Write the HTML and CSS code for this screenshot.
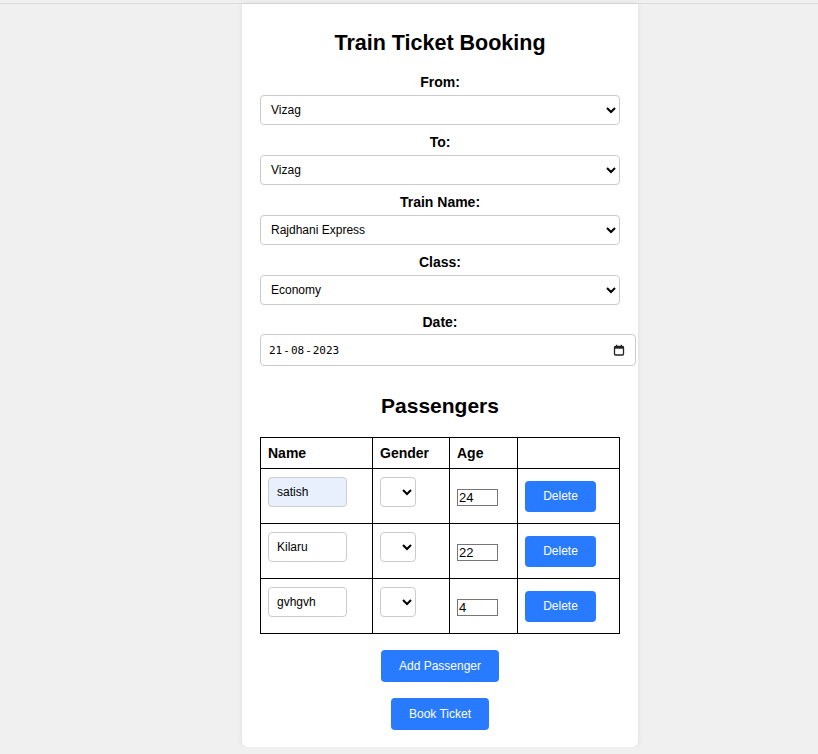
FILE: index.html
```html
<!DOCTYPE html>
<html>
<head>
<meta charset="utf-8">
<link rel="stylesheet" href="styles.css">
</head>
<body>
<div class="topline"></div>
<div class="container">
  <h1 class="title">Train Ticket Booking</h1>
  <div class="field">
    <label class="label">From:</label>
    <select class="select"><option>Vizag</option></select>
  </div>
  <div class="field">
    <label class="label">To:</label>
    <select class="select"><option>Vizag</option></select>
  </div>
  <div class="field">
    <label class="label">Train Name:</label>
    <select class="select"><option>Rajdhani Express</option></select>
  </div>
  <div class="field">
    <label class="label">Class:</label>
    <select class="select"><option>Economy</option></select>
  </div>
  <div class="field">
    <label class="label date-label">Date:</label>
    <div class="date">
      <span class="date-text"><span>21</span><span class="sep">-</span><span>08</span><span class="sep">-</span><span>2023</span></span>
      <svg class="cal" width="12" height="12" viewBox="0 0 12 12"><rect x="1.5" y="2.5" width="9" height="8.5" rx="1" fill="none" stroke="#222" stroke-width="1.3"/><rect x="1.5" y="2.5" width="9" height="2.2" fill="#222"/><rect x="3" y="0.8" width="1.3" height="2.2" fill="#222"/><rect x="7.7" y="0.8" width="1.3" height="2.2" fill="#222"/></svg>
    </div>
  </div>
  <h2 class="subtitle">Passengers</h2>
  <table class="ptable">
    <thead>
      <tr><th class="c1">Name</th><th class="c2">Gender</th><th class="c3">Age</th><th class="c4"></th></tr>
    </thead>
    <tbody>
      <tr>
        <td><input class="name autofill" type="text" value="satish"></td>
        <td><select class="gender"><option></option></select></td>
        <td><input class="age" type="text" value="24"></td>
        <td><button class="btn del">Delete</button></td>
      </tr>
      <tr>
        <td><input class="name" type="text" value="Kilaru"></td>
        <td><select class="gender"><option></option></select></td>
        <td><input class="age" type="text" value="22"></td>
        <td><button class="btn del">Delete</button></td>
      </tr>
      <tr>
        <td><input class="name" type="text" value="gvhgvh"></td>
        <td><select class="gender"><option></option></select></td>
        <td><input class="age" type="text" value="4"></td>
        <td><button class="btn del">Delete</button></td>
      </tr>
    </tbody>
  </table>
  <div class="actions">
    <button class="btn big add">Add Passenger</button>
    <button class="btn big book">Book Ticket</button>
  </div>
</div>
</body>
</html>
```
FILE: styles.css
```css
html, body {
  margin: 0;
  padding: 0;
  background: #f0f0f0;
  font-family: "Liberation Sans", Arial, sans-serif;
  color: #000;
}
.topline {
  height: 3px;
  border-bottom: 1px solid #dcdcdc;
  background: #f0f0f0;
}
.container {
  width: 360px;
  margin: 0 0 0 242px;
  padding: 1px 18px 17px;
  background: #fff;
  border-radius: 0 0 6px 6px;
  box-shadow: 0 0 6px rgba(0,0,0,0.08);
}
.title {
  font-size: 21.5px;
  font-weight: bold;
  text-align: center;
  margin: 26px 0 18px;
}
.field {
  display: flex;
  flex-direction: column;
  align-items: stretch;
}
.label {
  display: block;
  text-align: center;
  font-weight: bold;
  font-size: 14px;
  line-height: 16px;
  margin-bottom: 5px;
}
.date-label {
  margin-bottom: 4px;
}
.select {
  width: 360px;
  height: 30px;
  box-sizing: border-box;
  border: 1px solid #ccc;
  border-radius: 4px;
  padding: 0 6px;
  font-family: "Liberation Sans", Arial, sans-serif;
  font-size: 12px;
  background: #fff;
  color: #000;
  margin-bottom: 9px;
}
.date {
  width: 376px;
  height: 32px;
  box-sizing: border-box;
  padding: 0 10px 0 8px;
  border: 1px solid #ccc;
  border-radius: 4px;
  background: #fff;
  display: flex;
  align-items: center;
  justify-content: space-between;
}
.date-text {
  display: flex;
  gap: 1px;
  font-family: "DejaVu Sans Mono", "Liberation Mono", monospace;
  font-size: 11px;
  color: #000;
}
.cal {
  display: block;
}
.subtitle {
  font-size: 21px;
  font-weight: bold;
  text-align: center;
  margin: 28px 0 19px;
}
.ptable {
  width: 360px;
  border-collapse: collapse;
}
.ptable th, .ptable td {
  border: 1px solid #000;
  text-align: left;
  padding: 0 7px;
}
.ptable th {
  height: 30px;
  font-size: 14px;
  font-weight: bold;
}
.ptable td {
  height: 54px;
}
.c1 { width: 97px; }
.c2 { width: 62px; }
.c3 { width: 53px; }
.name {
  width: 79px;
  height: 30px;
  box-sizing: border-box;
  border: 1px solid #ccc;
  border-radius: 4px;
  padding: 0 8px;
  font-family: "Liberation Sans", Arial, sans-serif;
  font-size: 12px;
  background: #fff;
  margin-top: -8px;
  display: block;
}
.name.autofill {
  background: #e8f0fe;
}
.gender {
  width: 36px;
  height: 30px;
  box-sizing: border-box;
  border: 1px solid #ccc;
  border-radius: 4px;
  background: #fff;
  display: block;
  margin-top: -8px;
}
.age {
  width: 41px;
  height: 17px;
  box-sizing: border-box;
  border: 1px solid #767676;
  padding: 0 1px;
  font-family: "Liberation Sans", Arial, sans-serif;
  font-size: 13px;
  display: block;
  margin-top: 2px;
}
.btn {
  background: #287bff;
  color: #fff;
  border: none;
  border-radius: 4px;
  font-family: "Liberation Sans", Arial, sans-serif;
  font-size: 12px;
  cursor: pointer;
}
.del {
  width: 71px;
  height: 31px;
  display: block;
}
.actions {
  display: flex;
  flex-direction: column;
  align-items: center;
  gap: 16px;
  margin-top: 16px;
}
.big {
  height: 32px;
  padding: 0 18px;
}
```
